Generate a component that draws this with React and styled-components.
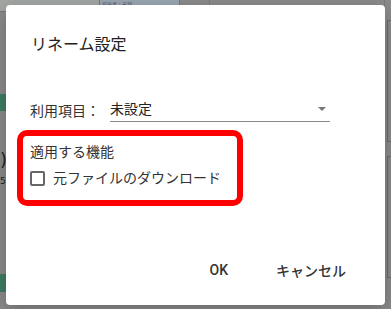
import React from "react";
import styled, { createGlobalStyle } from "styled-components";

const Global = createGlobalStyle`
  html, body { margin: 0; padding: 0; }
  body {
    width: 391px; height: 309px; overflow: hidden;
    background: #8b8b8b;
    font-family: Roboto, "Noto Sans CJK JP", sans-serif;
  }
`;

const Page = styled.div`
  position: relative;
  width: 391px;
  height: 309px;
  display: grid;
  grid-template-columns: 100px 80px 30px 1fr 6px;
  grid-template-rows: 12px 1fr;
  background: #8b8b8b;
`;

const TopCell = styled.div`
  border-bottom: 1px solid ${(p) => p.$line || "#7a7a7a"};
  border-right: 1px solid ${(p) => p.$line || "#7a7a7a"};
  background: ${(p) => p.$bg || "transparent"};
  border-bottom-right-radius: ${(p) => (p.$round ? "6px" : "0")};
  font-size: 5px;
  color: #556;
  padding-left: 2px;
`;

const LeftStrip = styled.div`
  grid-column: 1 / 2;
  display: flex;
  flex-direction: column;
  padding-top: 76px;
`;

const Tag = styled.div`
  width: 10px;
  height: ${(p) => p.$h}px;
  margin-top: ${(p) => p.$mt}px;
  background: #3f7d63;
`;

const Glyph = styled.div`
  margin-top: ${(p) => p.$mt}px;
  font-size: ${(p) => p.$size}px;
  line-height: 1;
  color: #222;
  font-family: "DejaVu Sans", sans-serif;
`;

const RightStrip = styled.div`
  grid-column: 5 / 6;
  grid-row: 1 / 3;
  display: flex;
  flex-direction: column;
  gap: 14px;
  padding-top: 20px;
`;

const RightBox = styled.div`
  height: 120px;
  border: 1px solid #6c6c6c;
  border-right: none;
  margin-left: 2px;
`;

const Dialog = styled.div`
  position: absolute;
  top: 5px;
  left: 6px;
  width: 379px;
  height: 300px;
  background: #fff;
  border-radius: 4px;
  box-shadow: 0 6px 20px rgba(0, 0, 0, 0.25);
  display: flex;
  flex-direction: column;
  box-sizing: border-box;
`;

const Title = styled.h2`
  margin: 0;
  padding: 28px 0 0 25px;
  font-size: 16px;
  line-height: 24px;
  font-weight: 400;
  color: #222;
`;

const FieldRow = styled.div`
  display: flex;
  align-items: flex-end;
  margin-top: 40px;
  padding-left: 24px;
  height: 24px;
`;

const Label = styled.span`
  width: 80px;
  font-size: 14px;
  line-height: 24px;
  color: #333;
  align-self: center;
  margin-top: 3px;
`;

const Select = styled.div`
  width: 220px;
  height: 23px;
  box-sizing: border-box;
  border-bottom: 1px solid #8a8a8a;
  display: flex;
  align-items: center;
  justify-content: space-between;
  font-size: 14px;
  color: #222;
  padding: 0 4px 4px 0;
  margin-bottom: -1px;
`;

const Arrow = styled.span`
  width: 0;
  height: 0;
  border-left: 4px solid transparent;
  border-right: 4px solid transparent;
  border-top: 4px solid #777;
  margin-top: 2px;
`;

const Highlight = styled.div`
  margin: 9px 0 0 11px;
  width: 226px;
  height: 76px;
  box-sizing: border-box;
  border: 6px solid #ff0000;
  border-radius: 10px;
  padding: 6px 0 0 7px;
  display: flex;
  flex-direction: column;
  gap: 6px;
`;

const SectionLabel = styled.div`
  font-size: 14px;
  line-height: 20px;
  color: #333;
`;

const CheckRow = styled.label`
  display: flex;
  align-items: center;
  gap: 8px;
  font-size: 14px;
  line-height: 20px;
  color: #333;
`;

const Box = styled.span`
  width: 15px;
  height: 15px;
  box-sizing: border-box;
  border: 2px solid #666;
  border-radius: 2px;
  margin-top: 1px;
`;

const Actions = styled.div`
  margin-top: auto;
  display: flex;
  justify-content: flex-end;
  align-items: center;
  padding: 0 27px 17px 0;
  gap: 24px;
`;

const Button = styled.button`
  border: none;
  background: none;
  font-family: inherit;
  font-size: 14px;
  font-weight: 500;
  color: #333;
  padding: 0 12px;
  height: 36px;
`;

export default function App() {
  return (
    <>
      <Global />
      <Page>
        <TopCell $bg="#a2a7a4" $round />
        <TopCell $bg="#9aa6b1">担当者：未割</TopCell>
        <TopCell />
        <TopCell />
        <LeftStrip>
          <Tag $h={17} $mt={6} />
          <Glyph $mt={40} $size={18}>)</Glyph>
          <Glyph $mt={8} $size={9}>5</Glyph>
          <Tag $h={18} $mt={88} />
        </LeftStrip>
        <RightStrip>
          <RightBox />
          <RightBox />
        </RightStrip>
        <Dialog>
          <Title>リネーム設定</Title>
          <FieldRow>
            <Label>利用項目：</Label>
            <Select>
              <span>未設定</span>
              <Arrow />
            </Select>
          </FieldRow>
          <Highlight>
            <SectionLabel>適用する機能</SectionLabel>
            <CheckRow>
              <Box />
              元ファイルのダウンロード
            </CheckRow>
          </Highlight>
          <Actions>
            <Button>OK</Button>
            <Button>キャンセル</Button>
          </Actions>
        </Dialog>
      </Page>
    </>
  );
}
